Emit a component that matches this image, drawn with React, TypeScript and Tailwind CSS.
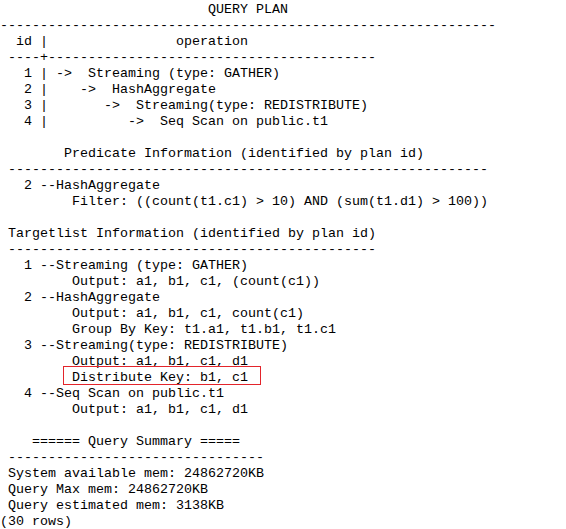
import React from "react";

const lines: string[] = [
  "                          QUERY PLAN",
  "-".repeat(62),
  "  id |                operation",
  " ----+" + "-".repeat(41),
  "   1 | ->  Streaming (type: GATHER)",
  "   2 |    ->  HashAggregate",
  "   3 |       ->  Streaming(type: REDISTRIBUTE)",
  "   4 |          ->  Seq Scan on public.t1",
  "",
  "        Predicate Information (identified by plan id)",
  " " + "-".repeat(60),
  "   2 --HashAggregate",
  "         Filter: ((count(t1.c1) > 10) AND (sum(t1.d1) > 100))",
  "",
  " Targetlist Information (identified by plan id)",
  " " + "-".repeat(46),
  "   1 --Streaming (type: GATHER)",
  "         Output: a1, b1, c1, (count(c1))",
  "   2 --HashAggregate",
  "         Output: a1, b1, c1, count(c1)",
  "         Group By Key: t1.a1, t1.b1, t1.c1",
  "   3 --Streaming(type: REDISTRIBUTE)",
  "         Output: a1, b1, c1, d1",
  "         Distribute Key: b1, c1",
  "   4 --Seq Scan on public.t1",
  "         Output: a1, b1, c1, d1",
  "",
  "    ====== Query Summary =====",
  " " + "-".repeat(32),
  " System available mem: 24862720KB",
  " Query Max mem: 24862720KB",
  " Query estimated mem: 3138KB",
  "(30 rows)",
];

export default function App() {
  return (
    <div className="relative w-[566px] h-[529px] bg-white overflow-hidden">
      <pre
        className="m-0 pt-[2px] text-black text-[13.333px] leading-[16px] whitespace-pre"
        style={{ fontFamily: '"Liberation Mono", "Courier New", monospace' }}
      >
        {lines.map((l, i) => (
          <div key={i} className="h-[16px]">
            {l || " "}
          </div>
        ))}
      </pre>
      <div className="absolute left-[63px] top-[366px] w-[198px] h-[19px] border border-[#e3242b]" />
    </div>
  );
}
